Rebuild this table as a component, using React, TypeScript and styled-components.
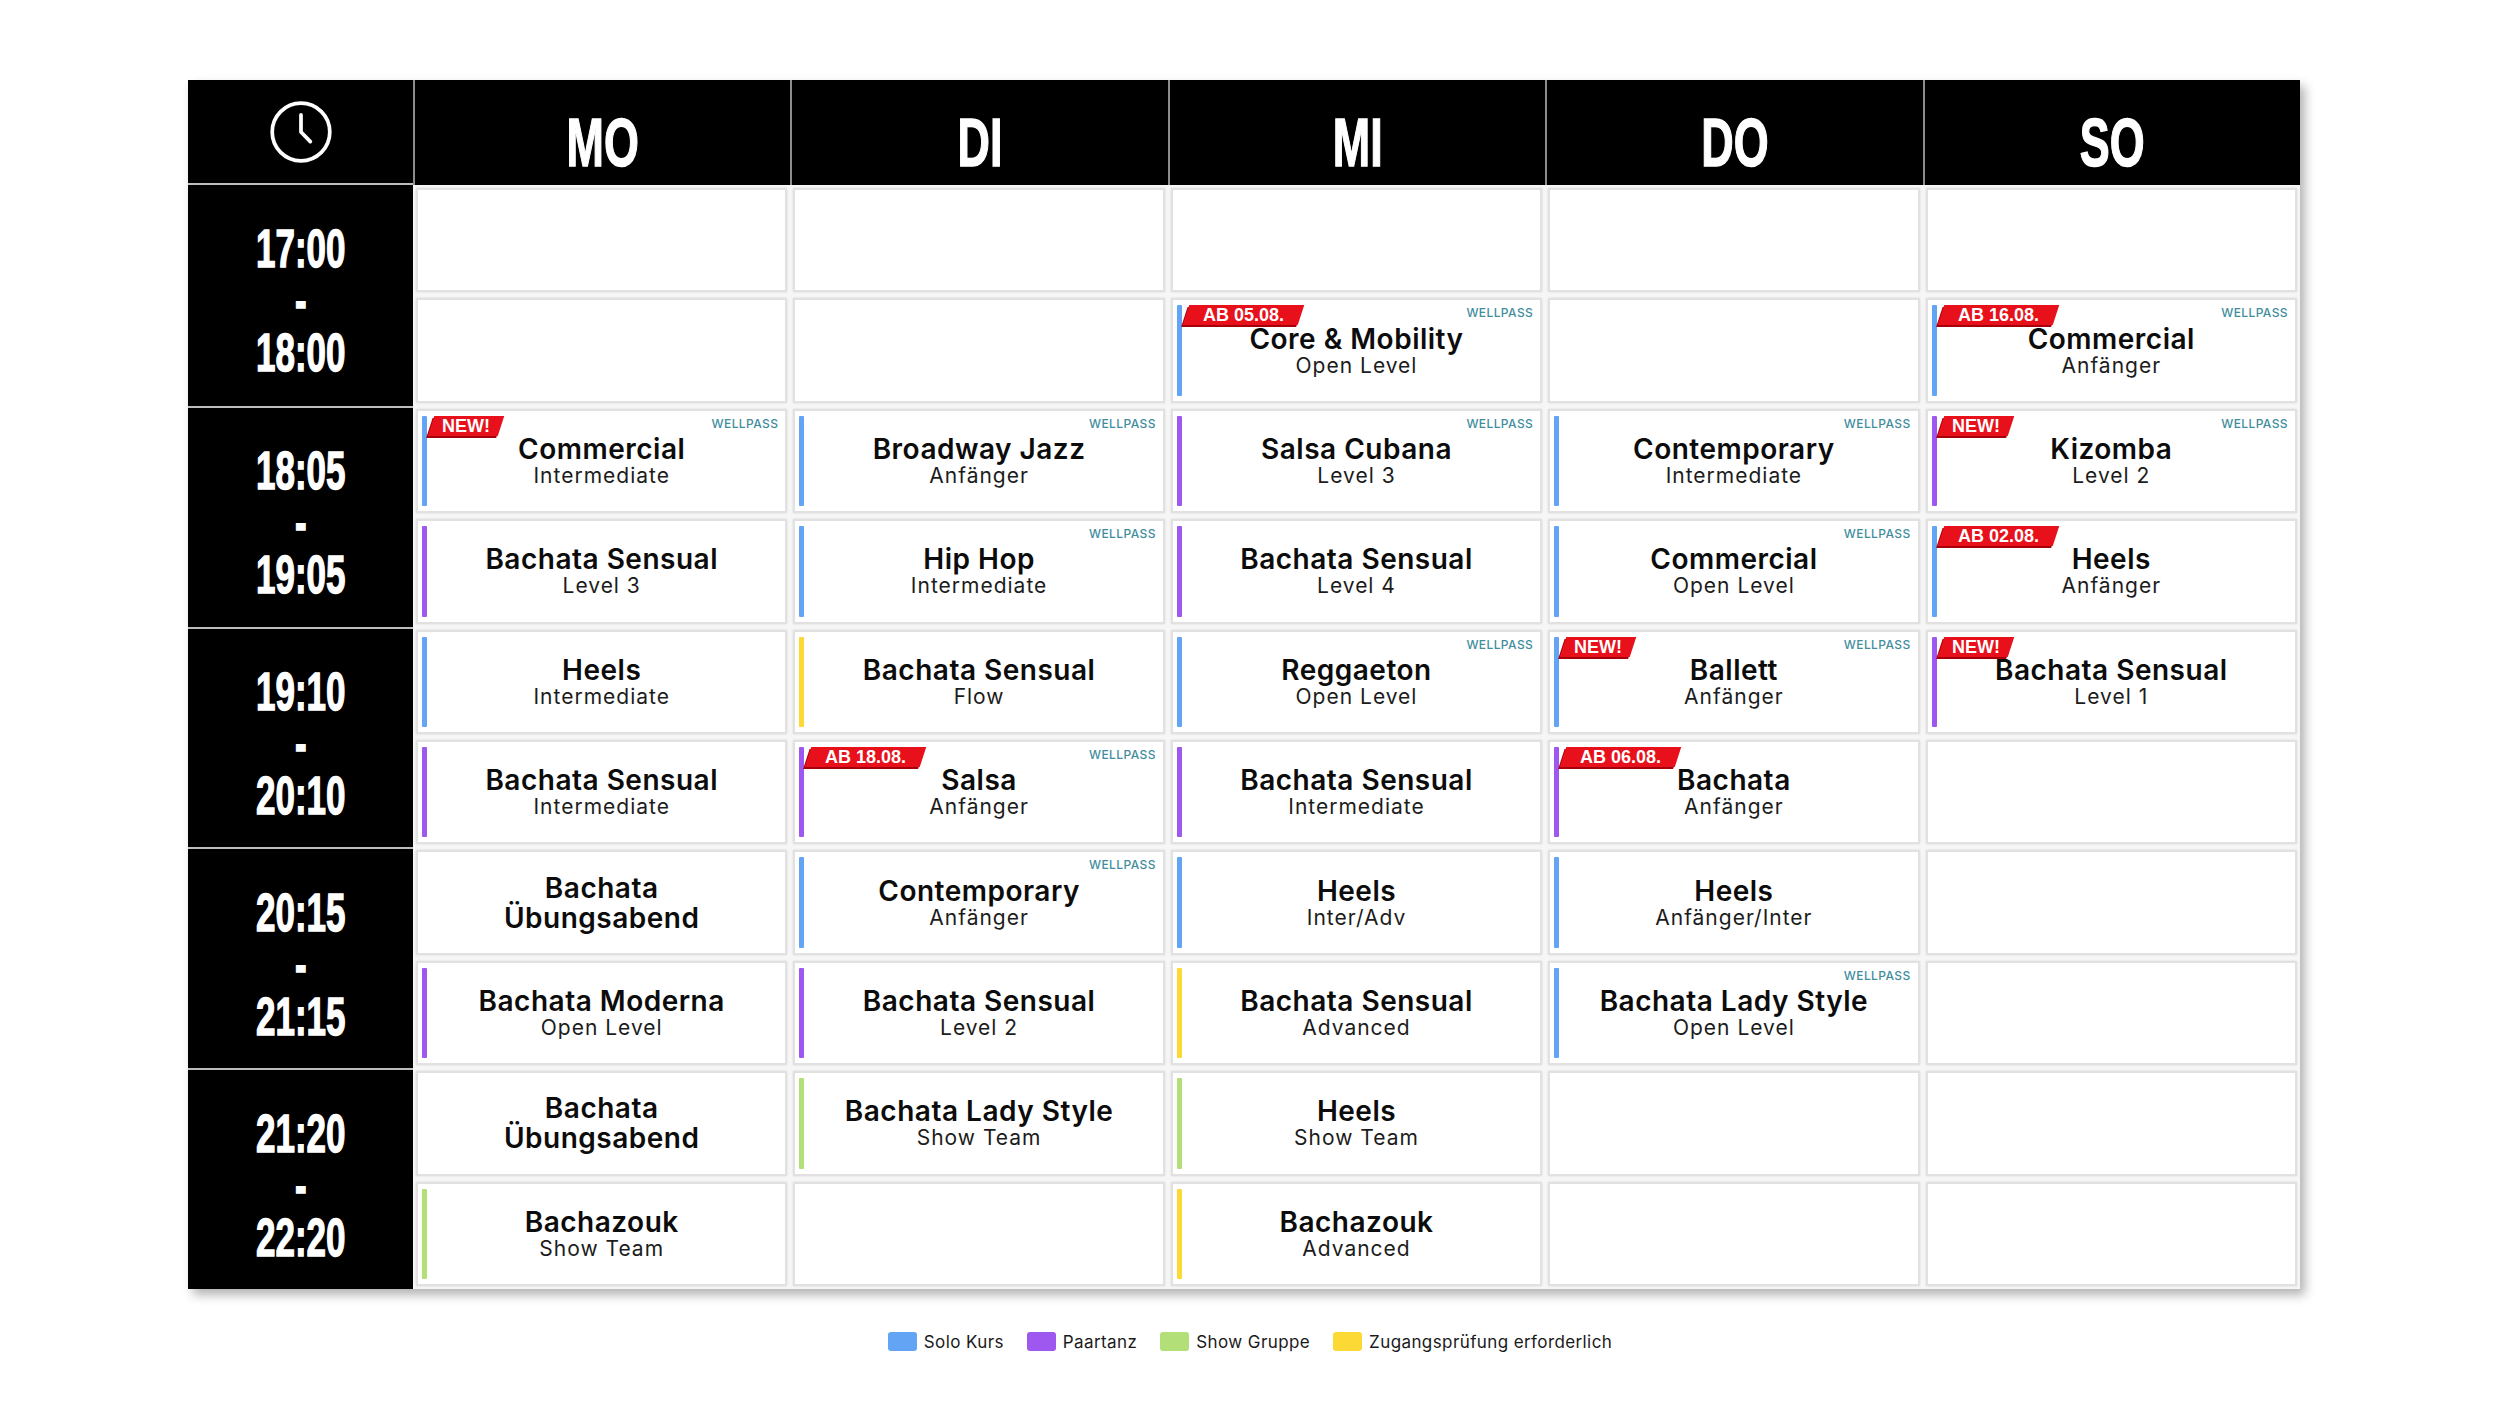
import React from "react";
import styled, { createGlobalStyle } from "styled-components";

type Kind = "solo" | "pair" | "show" | "test";

type Course = {
  title: string;
  sub?: string;
  kind?: Kind;
  tag?: string;
  wellpass?: boolean;
};

type Block = {
  from: string;
  to: string;
  rows: (Course | null)[][];
};

const kindColors: Record<Kind, string> = {
  solo: "#63a4f4",
  pair: "#9e58f0",
  show: "#b3df78",
  test: "#fdd935",
};

const days = ["MO", "DI", "MI", "DO", "SO"];

const blocks: Block[] = [
  {
    from: "17:00",
    to: "18:00",
    rows: [
      [null, null, null, null, null],
      [
        null,
        null,
        { title: "Core & Mobility", sub: "Open Level", kind: "solo", tag: "AB 05.08.", wellpass: true },
        null,
        { title: "Commercial", sub: "Anfänger", kind: "solo", tag: "AB 16.08.", wellpass: true },
      ],
    ],
  },
  {
    from: "18:05",
    to: "19:05",
    rows: [
      [
        { title: "Commercial", sub: "Intermediate", kind: "solo", tag: "NEW!", wellpass: true },
        { title: "Broadway Jazz", sub: "Anfänger", kind: "solo", wellpass: true },
        { title: "Salsa Cubana", sub: "Level 3", kind: "pair", wellpass: true },
        { title: "Contemporary", sub: "Intermediate", kind: "solo", wellpass: true },
        { title: "Kizomba", sub: "Level 2", kind: "pair", tag: "NEW!", wellpass: true },
      ],
      [
        { title: "Bachata Sensual", sub: "Level 3", kind: "pair" },
        { title: "Hip Hop", sub: "Intermediate", kind: "solo", wellpass: true },
        { title: "Bachata Sensual", sub: "Level 4", kind: "pair" },
        { title: "Commercial", sub: "Open Level", kind: "solo", wellpass: true },
        { title: "Heels", sub: "Anfänger", kind: "solo", tag: "AB 02.08." },
      ],
    ],
  },
  {
    from: "19:10",
    to: "20:10",
    rows: [
      [
        { title: "Heels", sub: "Intermediate", kind: "solo" },
        { title: "Bachata Sensual", sub: "Flow", kind: "test" },
        { title: "Reggaeton", sub: "Open Level", kind: "solo", wellpass: true },
        { title: "Ballett", sub: "Anfänger", kind: "solo", tag: "NEW!", wellpass: true },
        { title: "Bachata Sensual", sub: "Level 1", kind: "pair", tag: "NEW!" },
      ],
      [
        { title: "Bachata Sensual", sub: "Intermediate", kind: "pair" },
        { title: "Salsa", sub: "Anfänger", kind: "pair", tag: "AB 18.08.", wellpass: true },
        { title: "Bachata Sensual", sub: "Intermediate", kind: "pair" },
        { title: "Bachata", sub: "Anfänger", kind: "pair", tag: "AB 06.08." },
        null,
      ],
    ],
  },
  {
    from: "20:15",
    to: "21:15",
    rows: [
      [
        { title: "Bachata\nÜbungsabend" },
        { title: "Contemporary", sub: "Anfänger", kind: "solo", wellpass: true },
        { title: "Heels", sub: "Inter/Adv", kind: "solo" },
        { title: "Heels", sub: "Anfänger/Inter", kind: "solo" },
        null,
      ],
      [
        { title: "Bachata Moderna", sub: "Open Level", kind: "pair" },
        { title: "Bachata Sensual", sub: "Level 2", kind: "pair" },
        { title: "Bachata Sensual", sub: "Advanced", kind: "test" },
        { title: "Bachata Lady Style", sub: "Open Level", kind: "solo", wellpass: true },
        null,
      ],
    ],
  },
  {
    from: "21:20",
    to: "22:20",
    rows: [
      [
        { title: "Bachata\nÜbungsabend" },
        { title: "Bachata Lady Style", sub: "Show Team", kind: "show" },
        { title: "Heels", sub: "Show Team", kind: "show" },
        null,
        null,
      ],
      [
        { title: "Bachazouk", sub: "Show Team", kind: "show" },
        null,
        { title: "Bachazouk", sub: "Advanced", kind: "test" },
        null,
        null,
      ],
    ],
  },
];

const legend: { kind: Kind; label: string }[] = [
  { kind: "solo", label: "Solo Kurs" },
  { kind: "pair", label: "Paartanz" },
  { kind: "show", label: "Show Gruppe" },
  { kind: "test", label: "Zugangsprüfung erforderlich" },
];

const GlobalStyle = createGlobalStyle`
  html, body {
    margin: 0;
    padding: 0;
    background: #ffffff;
  }
  body {
    font-family: Inter, "Liberation Sans", sans-serif;
    color: #111;
    -webkit-font-smoothing: antialiased;
  }
`;

const Page = styled.div`
  width: 2500px;
  height: 1406px;
  padding-top: 80px;
  box-sizing: border-box;
  display: flex;
  flex-direction: column;
`;

const Table = styled.div`
  margin-left: 188px;
  width: 2112px;
  display: grid;
  grid-template-columns: 225px repeat(5, 1fr);
  grid-template-rows: 105px repeat(10, 110.4px);
  background: #f6f6f6;
  box-shadow: 5px 6px 10px rgba(0, 0, 0, 0.3);
`;

const ClockHead = styled.div`
  background: #000;
  display: flex;
  align-items: center;
  justify-content: center;
  border-bottom: 2px solid #bdbdbd;
  box-sizing: border-box;
`;

const DayHead = styled.div`
  background: #000;
  border-left: 2px solid #8c8c8c;
  display: flex;
  align-items: center;
  justify-content: center;
  padding-top: 18px;
  box-sizing: border-box;
`;

const Condensed = styled.span<{ $size: number; $lh: number }>`
  display: inline-block;
  font-family: "Liberation Sans", Arial, sans-serif;
  font-weight: 700;
  font-size: ${(p) => p.$size}px;
  line-height: ${(p) => p.$lh}px;
  text-align: center;
  color: #fff;
  -webkit-text-stroke: 1.4px #fff;
  transform: scaleX(0.66);
  white-space: pre;
`;

const TimeBlock = styled.div<{ $first: boolean }>`
  grid-row: span 2;
  background: #000;
  border-top: ${(p) => (p.$first ? "none" : "2px solid #bdbdbd")};
  display: flex;
  align-items: center;
  justify-content: center;
  padding-top: 12px;
  box-sizing: border-box;
`;

const Slot = styled.div`
  padding: 3px 3px;
  box-sizing: border-box;
  min-width: 0;
`;

const Card = styled.div`
  position: relative;
  height: 100%;
  box-sizing: border-box;
  background: #fff;
  border: 2px solid #e1e1e1;
  box-shadow: 0 0 2px rgba(0, 0, 0, 0.12);
  display: flex;
  flex-direction: column;
  align-items: center;
  justify-content: center;
  text-align: center;
`;

const Bar = styled.div<{ $color: string }>`
  position: absolute;
  left: 4px;
  top: 5px;
  bottom: 5px;
  width: 5px;
  border-radius: 1px;
  background: ${(p) => p.$color};
`;

const Title = styled.div`
  font-family: Inter, "Liberation Sans", sans-serif;
  font-weight: 600;
  font-size: 28px;
  letter-spacing: 0.5px;
  line-height: 30px;
  color: #0c0c0c;
  white-space: pre-line;
`;

const Sub = styled.div`
  font-family: Inter, "Liberation Sans", sans-serif;
  font-weight: 400;
  font-size: 21px;
  letter-spacing: 1px;
  line-height: 24px;
  color: #1c1c1c;
`;

const Wellpass = styled.div`
  position: absolute;
  top: 6px;
  right: 7px;
  font-family: Inter, "Liberation Sans", sans-serif;
  font-weight: 500;
  font-size: 12px;
  line-height: 14px;
  letter-spacing: 0.4px;
  color: #3f8d9d;
`;

const Tag = styled.div<{ $wide: boolean }>`
  position: absolute;
  top: 5px;
  left: 13px;
  height: 20px;
  padding: 0 ${(p) => (p.$wide ? 17 : 11)}px;
  background: #e8101a;
  box-shadow: -1px 2px 0 #a8000a;
  transform: skewX(-18deg);
  display: flex;
  align-items: center;
`;

const TagText = styled.span`
  display: inline-block;
  transform: skewX(18deg);
  font-family: "Liberation Sans", Arial, sans-serif;
  font-weight: 700;
  font-size: 18px;
  line-height: 1;
  color: #fff;
  white-space: nowrap;
`;

const Legend = styled.div`
  margin-top: 43px;
  display: flex;
  justify-content: center;
  align-items: center;
  gap: 23px;
`;

const LegendItem = styled.div`
  display: flex;
  align-items: center;
  gap: 7px;
`;

const Swatch = styled.div<{ $color: string }>`
  width: 29px;
  height: 19px;
  border-radius: 3px;
  background: ${(p) => p.$color};
`;

const LegendLabel = styled.span`
  font-family: Inter, "Liberation Sans", sans-serif;
  font-size: 17px;
  letter-spacing: 0.4px;
  color: #1a1a1a;
`;

const ClockIcon = () => (
  <svg
    width="64"
    height="64"
    viewBox="0 0 24 24"
    fill="none"
    stroke="#fff"
    strokeWidth="1.4"
    strokeLinecap="round"
    strokeLinejoin="round"
  >
    <circle cx="12" cy="12" r="10.8" />
    <polyline points="12 5.6 12 12 15.5 15.6" />
  </svg>
);

const CourseCell = ({ course }: { course: Course | null }) => (
  <Slot>
    <Card>
      {course && (
        <>
          {course.kind && <Bar $color={kindColors[course.kind]} />}
          {course.tag && (
            <Tag $wide={course.tag.startsWith("AB")}>
              <TagText>{course.tag}</TagText>
            </Tag>
          )}
          {course.wellpass && <Wellpass>WELLPASS</Wellpass>}
          <Title>{course.title}</Title>
          {course.sub && <Sub>{course.sub}</Sub>}
        </>
      )}
    </Card>
  </Slot>
);

const App = () => {
  return (
    <Page>
      <GlobalStyle />
      <Table>
        <ClockHead>
          <ClockIcon />
        </ClockHead>
        {days.map((d) => (
          <DayHead key={d}>
            <Condensed $size={68} $lh={68}>
              {d}
            </Condensed>
          </DayHead>
        ))}

        {blocks.map((block, b) => (
          <React.Fragment key={block.from}>
            <TimeBlock $first={b === 0}>
              <Condensed $size={53} $lh={52}>
                {`${block.from}\n-\n${block.to}`}
              </Condensed>
            </TimeBlock>
            {block.rows.map((row, r) =>
              row.map((course, c) => (
                <CourseCell key={`${b}-${r}-${c}`} course={course} />
              )),
            )}
          </React.Fragment>
        ))}
      </Table>

      <Legend>
        {legend.map((item) => (
          <LegendItem key={item.kind}>
            <Swatch $color={kindColors[item.kind]} />
            <LegendLabel>{item.label}</LegendLabel>
          </LegendItem>
        ))}
      </Legend>
    </Page>
  );
};

export default App;
